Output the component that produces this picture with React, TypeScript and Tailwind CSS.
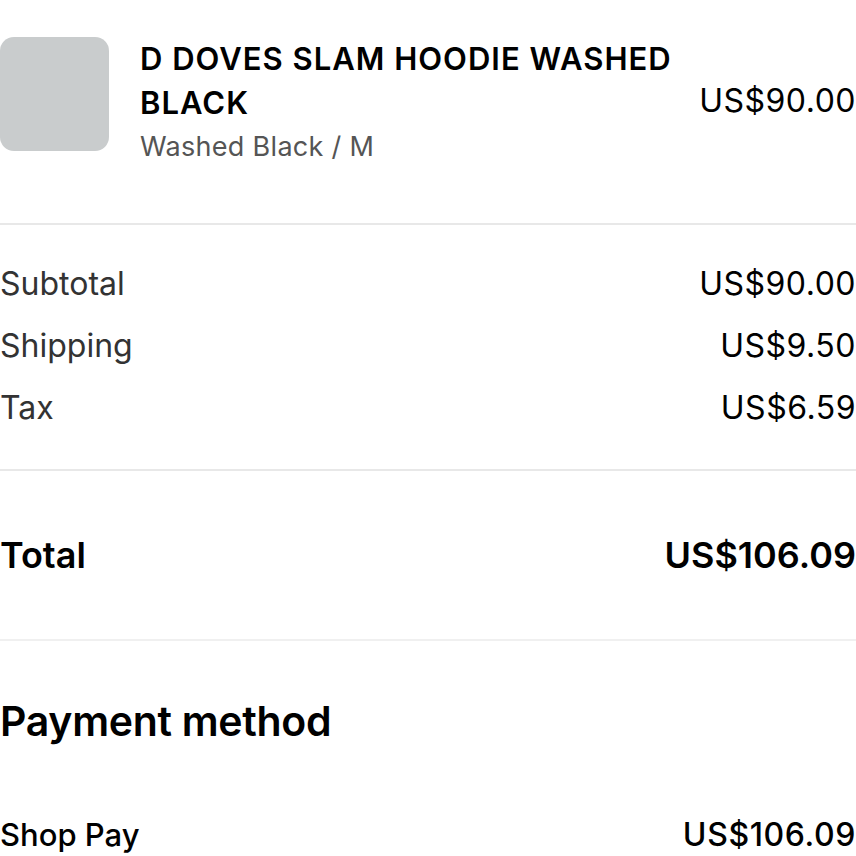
const summary = [
  { label: "Subtotal", amount: "US$90.00" },
  { label: "Shipping", amount: "US$9.50" },
  { label: "Tax", amount: "US$6.59" },
];

export default function App() {
  return (
    <div className="min-h-[856px] w-[856px] overflow-hidden bg-white font-['Inter','Liberation_Sans',sans-serif] text-black">
      {/* Line item */}
      <section className="flex items-start border-b-2 border-[#e8e8e8] pt-[37px] pb-[58px]">
        <div className="h-[114px] w-[109px] shrink-0 rounded-[14px] bg-[#c9cccd]" />
        <div className="ml-[31px] flex-1">
          <p className="text-[31px] font-semibold leading-[44px] tracking-[1px]">
            D DOVES SLAM HOODIE WASHED
            <br />
            BLACK
          </p>
          <p className="mt-1 text-[27px] leading-9 tracking-[0.3px] text-[#555555]">
            Washed Black / M
          </p>
        </div>
        <p className="self-center text-[32px] leading-9 tracking-[0.5px]">
          US$90.00
        </p>
      </section>

      {/* Costs */}
      <section className="border-b-2 border-[#e8e8e8] pt-7 pb-[30px]">
        {summary.map((row) => (
          <div
            key={row.label}
            className="flex justify-between text-[32px] leading-[62px]"
          >
            <span className="text-[#333333]">{row.label}</span>
            <span className="tracking-[0.5px]">{row.amount}</span>
          </div>
        ))}
      </section>

      <section className="flex justify-between border-b-2 border-[#f0f0f0] py-[61px] text-[36px] font-semibold leading-[46px]">
        <span>Total</span>
        <span>US$106.09</span>
      </section>

      {/* Payment */}
      <section className="pt-[55px]">
        <h2 className="text-[41px] font-semibold leading-[50px] tracking-[-0.3px]">
          Payment method
        </h2>
        <div className="mt-[69px] flex justify-between text-[31px] font-medium leading-10">
          <span>Shop Pay</span>
          <span className="text-[32px] tracking-[0.6px]">US$106.09</span>
        </div>
      </section>
    </div>
  );
}
